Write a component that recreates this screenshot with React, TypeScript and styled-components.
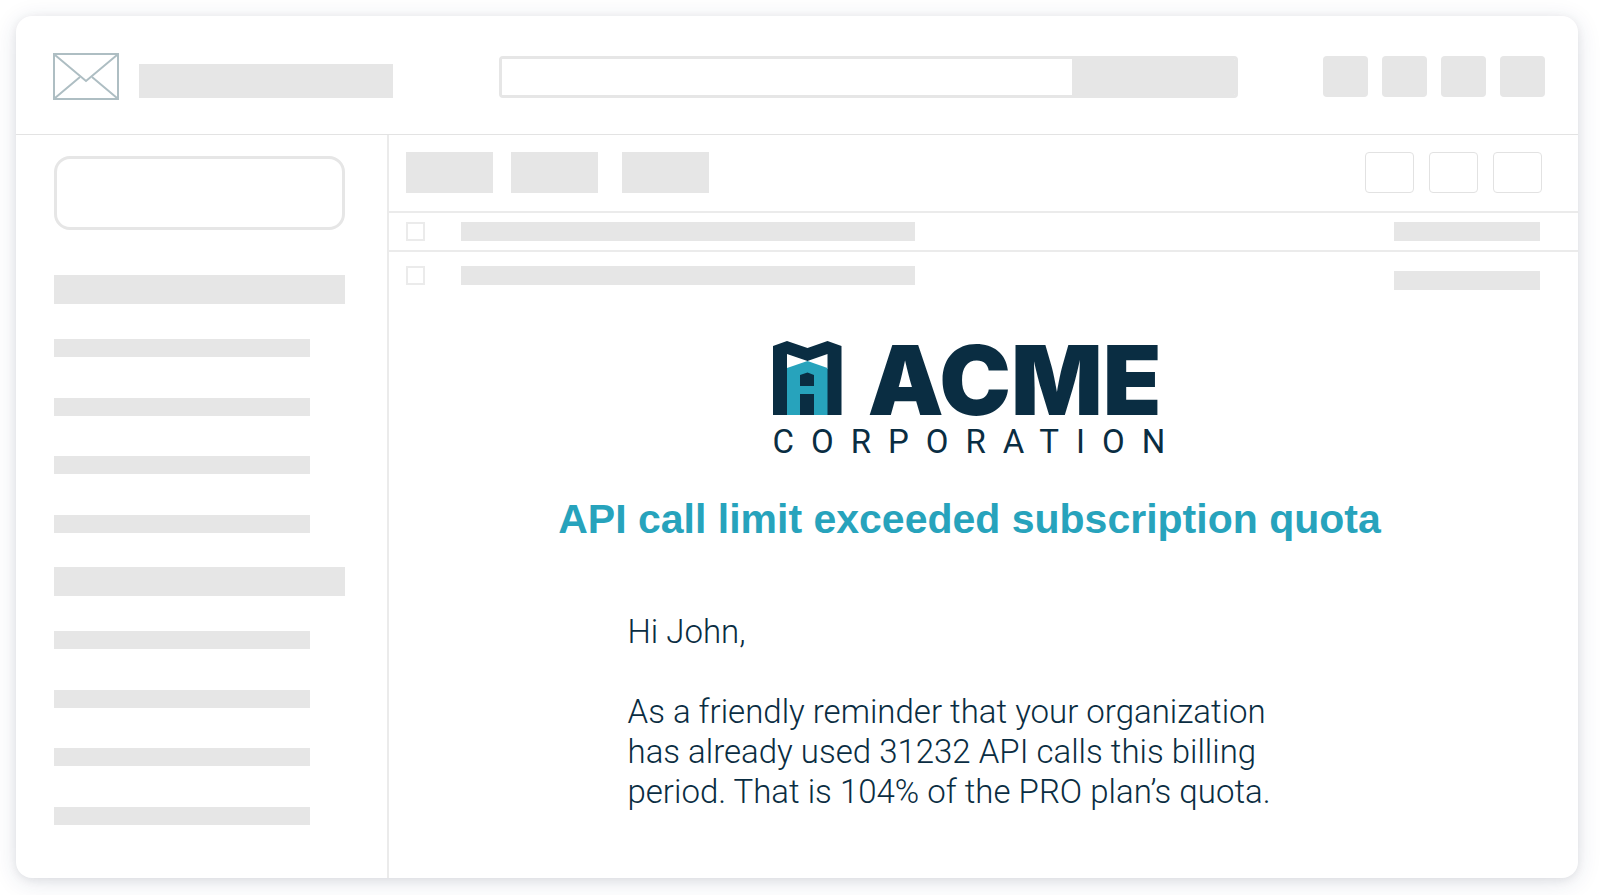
import React from "react";
import styled, { createGlobalStyle } from "styled-components";

const color = {
  fill: "#e6e6e6",
  line: "#ebebeb",
  navy: "#0a2d42",
  teal: "#27a3bc",
  envelope: "#aebec3",
};

const GlobalStyle = createGlobalStyle`
  *, *::before, *::after { box-sizing: border-box; }
  body {
    margin: 0;
    background: #ffffff;
    color: ${color.navy};
    font-family: Roboto, "Liberation Sans", sans-serif;
  }
  button, input { font: inherit; margin: 0; }
  h1, p, ul { margin: 0; padding: 0; }
`;

const Page = styled.div`
  display: flex;
  min-height: 100vh;
  padding: 16px 22px 17px 16px;
`;

const MailWindow = styled.div`
  display: flex;
  flex-direction: column;
  flex: 1;
  min-width: 0;
  overflow: hidden;
  border-radius: 16px;
  background: #ffffff;
  box-shadow: 0 4px 24px rgba(30, 50, 100, 0.12), 0 2px 10px rgba(0, 0, 0, 0.07);
`;

const Header = styled.header`
  display: flex;
  align-items: center;
  height: 119px;
  padding: 3px 33px 0 37px;
  border-bottom: 1px solid #e3e3e3;
`;

const Brand = styled.div`
  display: flex;
  align-items: flex-end;
  gap: 20px;
`;

const BrandName = styled.div`
  width: 254px;
  height: 34px;
  margin-bottom: 2px;
  background: ${color.fill};
`;

const Search = styled.form`
  display: flex;
  flex: 1;
  height: 42px;
  margin: 0 85px 0 106px;
  overflow: hidden;
  border: 3px solid ${color.fill};
  border-radius: 4px;
`;

const SearchInput = styled.input`
  flex: 1;
  min-width: 0;
  padding: 0 12px;
  border: 0;
  background: #ffffff;
  color: ${color.navy};
  font-size: 16px;
`;

const SearchButton = styled.button`
  width: 163px;
  border: 0;
  background: ${color.fill};
`;

const HeaderActions = styled.div`
  display: flex;
  gap: 14px;
`;

const HeaderButton = styled.button`
  width: 45px;
  height: 41px;
  padding: 0;
  border: 0;
  border-radius: 4px;
  background: ${color.fill};
`;

const Columns = styled.div`
  display: flex;
  flex: 1;
`;

const Sidebar = styled.aside`
  display: flex;
  flex-direction: column;
  flex: none;
  width: 373px;
  padding: 21px 42px 18px 38px;
  border-right: 2px solid ${color.line};
`;

const ComposeButton = styled.button`
  height: 74px;
  margin-bottom: 45px;
  border: 3px solid ${color.fill};
  border-radius: 16px;
  background: #ffffff;
`;

const FolderGroup = styled.section`
  margin-bottom: 34px;
`;

const FolderTitle = styled.div`
  height: 29px;
  margin-bottom: 35px;
  background: ${color.fill};
`;

const FolderList = styled.ul`
  display: flex;
  flex-direction: column;
  justify-content: space-between;
  width: 256px;
  height: 194px;
  list-style: none;
`;

const Folder = styled.li`
  height: 18px;
  background: ${color.fill};
`;

const Main = styled.main`
  display: flex;
  flex-direction: column;
  flex: 1;
  min-width: 0;
`;

const Toolbar = styled.div`
  display: flex;
  justify-content: space-between;
  height: 78px;
  padding: 17px 36px 0 17px;
  border-bottom: 2px solid ${color.line};
`;

const ToolGroup = styled.div<{ $gap: number }>`
  display: flex;
  gap: ${(p) => p.$gap}px;
`;

const ToolButton = styled.button`
  width: 87px;
  height: 41px;
  padding: 0;
  border: 0;
  background: ${color.fill};
`;

const PagerButton = styled.button`
  width: 49px;
  height: 41px;
  padding: 0;
  border: 1px solid #e2e2e2;
  border-radius: 4px;
  background: #ffffff;
`;

const MessageRow = styled.div<{ $open?: boolean }>`
  display: flex;
  align-items: flex-start;
  padding: ${(p) => (p.$open ? "14px" : "9px")} 38px ${(p) => (p.$open ? "0" : "9px")} 17px;
  border-bottom: ${(p) => (p.$open ? "0" : `2px solid ${color.line}`)};
`;

const RowCheckbox = styled.input`
  appearance: none;
  flex: none;
  width: 19px;
  height: 19px;
  margin: 0 36px 0 0;
  border: 2px solid ${color.line};
  background: #ffffff;
  &:checked { background: ${color.teal}; }
`;

const Subject = styled.div`
  width: 454px;
  height: 19px;
  background: ${color.fill};
`;

const DateBar = styled.div<{ $open?: boolean }>`
  width: 146px;
  height: 19px;
  margin-top: ${(p) => (p.$open ? "5px" : "0")};
  margin-left: auto;
  background: ${color.fill};
`;

const Email = styled.article`
  display: flex;
  flex-direction: column;
  align-items: center;
  padding: 51px 28px 40px 0;
`;

const Logo = styled.div`
  width: 394px;
  margin-bottom: 41px;
`;

const LogoTop = styled.div`
  display: flex;
  align-items: flex-end;
  gap: 26px;
`;

const LogoName = styled.div`
  font-family: Inter, "Liberation Sans", sans-serif;
  font-size: 96px;
  font-weight: 900;
  line-height: 70px;
`;

const LogoSub = styled.div`
  margin-top: 15px;
  font-size: 33px;
  line-height: 24px;
  letter-spacing: 17px;
  white-space: nowrap;
`;

const Title = styled.h1`
  margin-bottom: 69px;
  color: ${color.teal};
  font-family: "Liberation Sans", Arial, sans-serif;
  font-size: 41px;
  font-weight: 700;
  line-height: 48px;
`;

const Copy = styled.div`
  display: flex;
  flex-direction: column;
  gap: 40px;
  width: 684px;
  font-size: 33px;
  font-weight: 300;
  line-height: 40px;
`;

function EnvelopeIcon() {
  return (
    <svg width="66" height="47" viewBox="0 0 66 47" fill="none" stroke={color.envelope} strokeWidth="2" aria-hidden="true">
      <rect x="1" y="1" width="64" height="45" />
      <path d="M2 2 L33 28 L64 2" />
      <path d="M2 45 L27 24 M64 45 L39 24" />
    </svg>
  );
}

function TowerIcon() {
  return (
    <svg width="69" height="74" viewBox="0 0 69 74" aria-hidden="true">
      <path fill={color.navy} d="M0 5 L14 0 L34.5 7 L54.5 0 L68.5 5 V74 H0 Z" />
      <path fill="#ffffff" d="M14 13 L34.5 20 L54.5 13 V28 H14 Z" />
      <path fill={color.teal} d="M14 27 L34.5 20 L54.5 27 V74 H14 Z" />
      <path fill={color.navy} d="M27 34 L34.5 31.5 L41 34 V45 H27 Z" />
      <path fill={color.navy} d="M27 53 H41 V74 H27 Z" />
    </svg>
  );
}

const folderGroups = [
  ["inbox", "starred", "sent", "drafts"],
  ["work", "travel", "receipts", "archive"],
];

export default function App() {
  return (
    <>
      <GlobalStyle />
      <Page>
        <MailWindow>
          <Header>
            <Brand>
              <EnvelopeIcon />
              <BrandName />
            </Brand>
            <Search role="search" onSubmit={(e) => e.preventDefault()}>
              <SearchInput type="search" aria-label="Search mail" />
              <SearchButton type="submit" aria-label="Search" />
            </Search>
            <HeaderActions>
              {["Help", "Settings", "Apps", "Account"].map((name) => (
                <HeaderButton key={name} type="button" aria-label={name} />
              ))}
            </HeaderActions>
          </Header>
          <Columns>
            <Sidebar>
              <ComposeButton type="button" aria-label="Compose" />
              {folderGroups.map((group) => (
                <FolderGroup key={group[0]}>
                  <FolderTitle />
                  <FolderList>
                    {group.map((folder) => (
                      <Folder key={folder} />
                    ))}
                  </FolderList>
                </FolderGroup>
              ))}
            </Sidebar>
            <Main>
              <Toolbar>
                <ToolGroup $gap={24}>
                  <ToolGroup $gap={18}>
                    <ToolButton type="button" aria-label="Archive" />
                    <ToolButton type="button" aria-label="Delete" />
                  </ToolGroup>
                  <ToolButton type="button" aria-label="Move" />
                </ToolGroup>
                <ToolGroup $gap={15}>
                  <PagerButton type="button" aria-label="Newer" />
                  <PagerButton type="button" aria-label="Older" />
                  <PagerButton type="button" aria-label="View options" />
                </ToolGroup>
              </Toolbar>
              <MessageRow>
                <RowCheckbox type="checkbox" aria-label="Select first message" />
                <Subject />
                <DateBar />
              </MessageRow>
              <MessageRow $open>
                <RowCheckbox type="checkbox" aria-label="Select second message" />
                <Subject />
                <DateBar $open />
              </MessageRow>
              <Email>
                <Logo>
                  <LogoTop>
                    <TowerIcon />
                    <LogoName>ACME</LogoName>
                  </LogoTop>
                  <LogoSub>CORPORATION</LogoSub>
                </Logo>
                <Title>API call limit exceeded subscription quota</Title>
                <Copy>
                  <p>Hi John,</p>
                  <p>
                    As a friendly reminder that your organization
                    <br />
                    has already used 31232 API calls this billing
                    <br />
                    period. That is 104% of the PRO plan’s quota.
                  </p>
                </Copy>
              </Email>
            </Main>
          </Columns>
        </MailWindow>
      </Page>
    </>
  );
}
